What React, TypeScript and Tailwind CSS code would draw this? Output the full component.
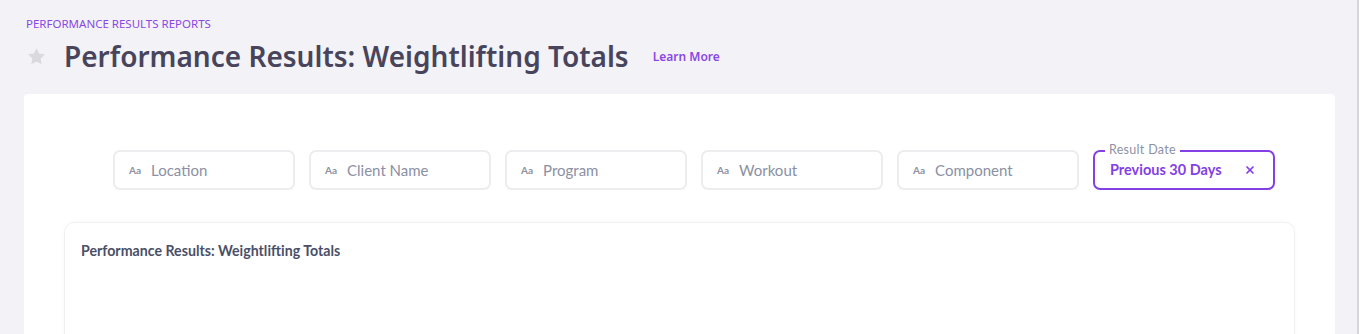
import { X } from "lucide-react";

const filters = ["Location", "Client Name", "Program", "Workout", "Component"];

export default function App() {
  return (
    <main className="h-[334px] overflow-hidden bg-[#f3f3f7] font-['Lato',sans-serif]">
      <header className="px-[26px] pt-[16px]">
        <div className="font-['Noto_Sans',sans-serif] text-[11.5px] uppercase leading-[16px] text-[#8b47e6]">
          Performance Results Reports
        </div>
        <div className="mt-[7px] flex items-center">
          <svg viewBox="0 0 24 24" className="h-[21px] w-[21px] fill-[#d9d9de]">
            <path d="M12 2.5l2.9 6.2 6.8.8-5 4.7 1.3 6.7L12 17.6l-6 3.3 1.3-6.7-5-4.7 6.8-.8z" />
          </svg>
          <h1 className="ml-[17px] font-['Noto_Sans',sans-serif] text-[28px] font-semibold leading-[34px] text-[#47445c]">
            Performance Results: Weightlifting Totals
          </h1>
          <a className="ml-[24px] mt-[2px] font-['Noto_Sans',sans-serif] text-[12px] font-semibold text-[#8b47e6]">
            Learn More
          </a>
        </div>
      </header>

      <section className="mx-[24px] mt-[21px] h-[260px] rounded-[4px] bg-white pl-[89px] pt-[56px]">
        <div className="flex gap-[14px]">
          {filters.map((f) => (
            <div
              key={f}
              className="flex h-[40px] w-[182px] items-center rounded-[7px] border-2 border-[#ededf0] px-[14px]"
            >
              <span className="text-[10px] font-bold text-[#8d91a3]">Aa</span>
              <span className="ml-[10px] text-[15px] text-[#8b90a4]">{f}</span>
            </div>
          ))}
          <div className="relative flex h-[40px] w-[182px] items-center justify-between rounded-[7px] border-2 border-[#8440e4] pl-[15px] pr-[17px]">
            <span className="absolute -top-[9px] left-[10px] bg-white px-[4px] text-[12.5px] leading-[14px] tracking-[0.3px] text-[#8d91a3]">
              Result Date
            </span>
            <span className="text-[14.5px] font-bold text-[#8440e4]">Previous 30 Days</span>
            <X className="h-[12px] w-[12px] text-[#8440e4]" strokeWidth={3.5} />
          </div>
        </div>

        <div className="ml-[-49px] mr-[40px] mt-[32px] h-[200px] rounded-[10px] border border-[#f1f1f4] px-[16px] pt-[17px] shadow-[0_0_4px_rgba(0,0,0,0.03)]">
          <div className="text-[14.2px] font-bold text-[#4a4f68]">
            Performance Results: Weightlifting Totals
          </div>
        </div>
      </section>
      <div className="fixed right-0 top-0 h-full w-[2px] bg-[#d6d6db]" />
    </main>
  );
}
